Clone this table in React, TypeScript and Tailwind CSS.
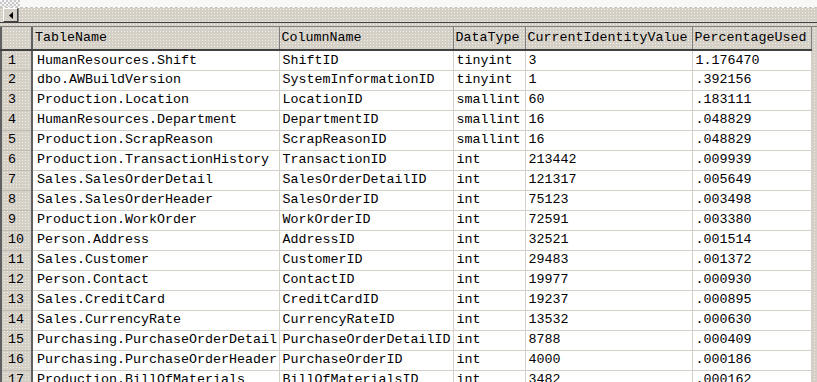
import React from 'react';

type Row = [string, string, string, string, string];

const ROWS: Row[] = [
  ['HumanResources.Shift', 'ShiftID', 'tinyint', '3', '1.176470'],
  ['dbo.AWBuildVersion', 'SystemInformationID', 'tinyint', '1', '.392156'],
  ['Production.Location', 'LocationID', 'smallint', '60', '.183111'],
  ['HumanResources.Department', 'DepartmentID', 'smallint', '16', '.048829'],
  ['Production.ScrapReason', 'ScrapReasonID', 'smallint', '16', '.048829'],
  ['Production.TransactionHistory', 'TransactionID', 'int', '213442', '.009939'],
  ['Sales.SalesOrderDetail', 'SalesOrderDetailID', 'int', '121317', '.005649'],
  ['Sales.SalesOrderHeader', 'SalesOrderID', 'int', '75123', '.003498'],
  ['Production.WorkOrder', 'WorkOrderID', 'int', '72591', '.003380'],
  ['Person.Address', 'AddressID', 'int', '32521', '.001514'],
  ['Sales.Customer', 'CustomerID', 'int', '29483', '.001372'],
  ['Person.Contact', 'ContactID', 'int', '19977', '.000930'],
  ['Sales.CreditCard', 'CreditCardID', 'int', '19237', '.000895'],
  ['Sales.CurrencyRate', 'CurrencyRateID', 'int', '13532', '.000630'],
  ['Purchasing.PurchaseOrderDetail', 'PurchaseOrderDetailID', 'int', '8788', '.000409'],
  ['Purchasing.PurchaseOrderHeader', 'PurchaseOrderID', 'int', '4000', '.000186'],
  ['Production.BillOfMaterials', 'BillOfMaterialsID', 'int', '3482', '.000162'],
];

const HEADERS = ['TableName', 'ColumnName', 'DataType', 'CurrentIdentityValue', 'PercentageUsed'];
const WIDTHS = [247, 174, 72, 167, 119];

// dithered win2k-ish gray
const DITHER =
  'bg-[#d4d0c8] bg-[radial-gradient(circle,#f4f0e0_0.7px,transparent_0.8px)] bg-[length:3px_3px]';

export default function App() {
  return (
    <div className="w-[817px] h-[382px] overflow-hidden bg-white font-['Liberation_Mono',monospace] text-[13.33px] leading-none text-black">
      {/* top strip */}
      <div className="flex h-[8px] border-b border-dashed border-[#c8c4bc]">
        <div className="w-[20px] h-full bg-[repeating-conic-gradient(#c8c8c8_0%_25%,#f4f4f4_0%_50%)] bg-[length:4px_4px]" />
        <div className="flex-1 bg-[#f8f8f6]" />
      </div>

      {/* horizontal scrollbar */}
      <div className={`flex h-[14px] items-stretch ${DITHER}`}>
        <div className="ml-[3px] flex w-[15px] items-center justify-center border-t border-l border-t-white border-l-white border-r border-b border-r-[#404040] border-b-[#404040] bg-[#d4d0c8]">
          <svg width="4" height="7" viewBox="0 0 4 7">
            <path d="M4 0 L0 3.5 L4 7 Z" fill="#000" />
          </svg>
        </div>
        <div className="w-[1px] bg-[#808080]" />
        <div className="flex-1" />
      </div>

      <div className="h-[1px] bg-[#404040]" />
      <div className={`h-[3px] ${DITHER}`} />
      <div className="h-[1px] bg-[#808080]" />

      {/* grid */}
      <div className={`flex ${DITHER}`}>
        <table className="table-fixed border-collapse border-l-2 border-l-[#606060]">
          <colgroup>
            <col style={{ width: 31 }} />
            {WIDTHS.map((w, i) => (
              <col key={i} style={{ width: w }} />
            ))}
          </colgroup>
          <thead>
            <tr className="h-[23px]">
              <th className="border-r-2 border-b-2 border-r-[#606060] border-b-[#404040]" />
              {HEADERS.map((h) => (
                <th
                  key={h}
                  className="overflow-hidden whitespace-nowrap border-r border-b-2 border-r-[#808080] border-b-[#404040] pl-[2px] text-left font-normal"
                >
                  {h}
                </th>
              ))}
            </tr>
          </thead>
          <tbody>
            {ROWS.map((r, i) => (
              <tr key={i} className="h-[20px]">
                <td className="border-r-2 border-b border-r-[#606060] border-b-[#c0bcb4] pl-[6px]">{i + 1}</td>
                {r.map((c, j) => (
                  <td
                    key={j}
                    className={`overflow-hidden whitespace-nowrap border-r border-b border-[#d4d0c8] bg-white ${
                      j === 0 ? 'pl-[4px]' : 'pl-[3px]'
                    }`}
                  >
                    {c}
                  </td>
                ))}
              </tr>
            ))}
          </tbody>
        </table>
        <div className="flex-1" />
      </div>
    </div>
  );
}
